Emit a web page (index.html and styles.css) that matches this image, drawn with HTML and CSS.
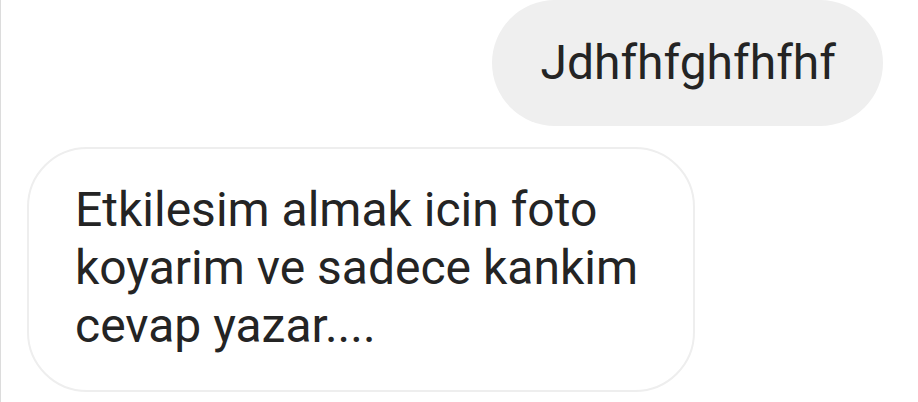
FILE: index.html
```html
<!DOCTYPE html>
<html lang="tr">
<head>
<meta charset="utf-8">
<title>Chat</title>
<link rel="stylesheet" href="styles.css">
</head>
<body>
<div class="chat">
  <div class="row row-out">
    <div class="bubble bubble-out">Jdhfhfghfhfhf</div>
  </div>
  <div class="row row-in">
    <div class="bubble bubble-in">Etkilesim almak icin foto<br>koyarim ve sadece kankim<br>cevap yazar....</div>
  </div>
</div>
</body>
</html>
```
FILE: styles.css
```css
html, body {
  margin: 0;
  padding: 0;
  background: #ffffff;
}
body {
  width: 918px;
  height: 402px;
  overflow: hidden;
  font-family: Roboto, "Liberation Sans", sans-serif;
  color: #242424;
}
.chat {
  height: 402px;
  box-sizing: border-box;
  border-left: 1px solid #dcdcdc;
  display: flex;
  flex-direction: column;
  gap: 21px;
}
.row {
  display: flex;
}
.row-out {
  justify-content: flex-end;
  padding-right: 35px;
}
.row-in {
  padding-left: 26px;
}
.bubble {
  font-size: 48px;
  line-height: 58px;
  box-sizing: border-box;
}
.bubble-out {
  height: 126px;
  padding: 0 47px 0 48px;
  display: flex;
  align-items: center;
  background: #efefef;
  border-radius: 63px;
}
.bubble-in {
  width: 668px;
  height: 245px;
  padding: 32px 46px 0;
  border: 2px solid #eeeeee;
  border-radius: 60px;
  background: #ffffff;
}
```
